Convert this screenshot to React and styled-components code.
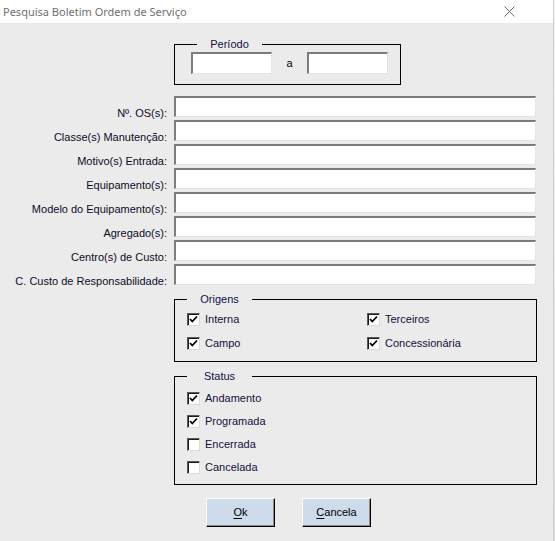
import React from 'react';
import styled, { createGlobalStyle } from 'styled-components';

const GlobalStyle = createGlobalStyle`
  html, body {
    margin: 0;
    padding: 0;
    background: #dcdcdc;
  }
  body {
    font-family: "Liberation Sans", Arial, sans-serif;
    font-size: 11px;
    color: #000;
  }
`;

const Screen = styled.div`
  display: flex;
  width: 555px;
  height: 541px;
  overflow: hidden;
`;

const Window = styled.div`
  width: 553px;
  height: 541px;
  display: flex;
  flex-direction: column;
  background: #ebebeb;
`;

const Strip = styled.div`
  flex: 1;
  background: linear-gradient(#f2f2f2, #dedede);
  border-left: 1px solid #d0d0d0;
`;

const TitleBar = styled.div`
  height: 23px;
  flex: none;
  display: flex;
  align-items: center;
  justify-content: space-between;
  background: #fff;
  padding: 0 38px 0 3px;
`;

const Title = styled.span`
  font-family: "Noto Sans", "Open Sans", sans-serif;
  font-size: 11px;
  color: #707070;
  padding-bottom: 1px;
`;

const Body = styled.div`
  display: grid;
  grid-template-columns: 167px 363px;
  column-gap: 7px;
  padding-top: 14px;
  align-content: start;
`;

const Group = styled.fieldset`
  grid-column: 2;
  box-sizing: border-box;
  width: ${p => p.$width || 363}px;
  margin: ${p => p.$top || 0}px 0 0 0;
  padding: ${p => p.$pad};
  border: 1px solid #000;
  min-width: 0;
`;

const Legend = styled.legend`
  margin-left: ${p => p.$offset}px;
  padding: 0;
  height: 14px;
`;

const LegendText = styled.span`
  display: block;
  width: 65px;
  text-align: center;
  line-height: 14px;
  color: #10104a;
`;

const PeriodRow = styled.div`
  display: flex;
  align-items: center;
`;

const Sep = styled.span`
  width: 35px;
  text-align: center;
  padding-bottom: 1px;
`;

const Input = styled.div`
  box-sizing: border-box;
  width: ${p => p.$width ? p.$width + 'px' : '100%'};
  height: ${p => p.$height || 21}px;
  background: #fff;
  border-top: 2px solid #7c7c7c;
  border-left: 2px solid #7c7c7c;
  border-right: 1px solid #e4e4e4;
  border-bottom: 1px solid #e4e4e4;
`;

const Fields = styled.div`
  grid-column: 1 / span 2;
  display: grid;
  grid-template-columns: 167px 362px;
  column-gap: 7px;
  row-gap: 3px;
  margin-top: 11px;
`;

const Label = styled.label`
  box-sizing: border-box;
  height: 21px;
  text-align: right;
  line-height: 13px;
  padding-top: 11px;
  white-space: nowrap;
  color: #0c0c28;
`;

const Checks = styled.div`
  display: grid;
  grid-template-columns: ${p => p.$cols};
  row-gap: ${p => p.$gap}px;
`;

const CheckItem = styled.div`
  display: flex;
  align-items: center;
  height: 15px;
  gap: 5px;
  line-height: 13px;
  color: #14103c;
`;

const Box = styled.span`
  box-sizing: border-box;
  width: 13px;
  height: 13px;
  flex: none;
  background: #fff;
  border-top: 1px solid #5a5a5a;
  border-left: 1px solid #5a5a5a;
  border-right: 1px solid #dcdcdc;
  border-bottom: 1px solid #dcdcdc;
  box-shadow: inset 1px 1px 0 #1a1a1a;
  display: flex;
  align-items: center;
  justify-content: center;
`;

const Buttons = styled.div`
  grid-column: 2;
  display: flex;
  gap: 27px;
  padding-left: 32px;
  margin-top: 13px;
`;

const Button = styled.button`
  box-sizing: border-box;
  width: 69px;
  height: 29px;
  padding: 0 0 1px;
  font-family: "Liberation Sans", Arial, sans-serif;
  font-size: 11px;
  color: #000;
  background: #cddbea;
  border-top: 1px solid #fff;
  border-left: 1px solid #fff;
  border-right: 1px solid #000;
  border-bottom: 1px solid #000;
  box-shadow: inset -1px -1px 0 #8a8a8a;
  u {
    text-decoration-thickness: 1px;
    text-underline-offset: 2px;
  }
`;

const Check = ({ checked, children }) => (
  <CheckItem>
    <Box>
      {checked && (
        <svg width="9" height="9" viewBox="0 0 9 9">
          <polyline points="1,4 3.3,6.5 8,1.5" fill="none" stroke="#000" strokeWidth="1.8" />
        </svg>
      )}
    </Box>
    <span>{children}</span>
  </CheckItem>
);

const fields = [
  'Nº. OS(s):',
  'Classe(s) Manutenção:',
  'Motivo(s) Entrada:',
  'Equipamento(s):',
  'Modelo do Equipamento(s):',
  'Agregado(s):',
  'Centro(s) de Custo:',
  'C. Custo de Responsabilidade:',
];

export default function App() {
  return (
    <Screen>
      <GlobalStyle />
      <Window>
        <TitleBar>
          <Title>Pesquisa Boletim Ordem de Serviço</Title>
          <svg width="11" height="11" viewBox="0 0 11 11">
            <path d="M0.5 0.5 L10.5 10.5 M10.5 0.5 L0.5 10.5" stroke="#6a6a6a" strokeWidth="1" />
          </svg>
        </TitleBar>
        <Body>
          <Group $width={227} $pad="1px 11px 10px 16px">
            <Legend $offset={6}><LegendText>Período</LegendText></Legend>
            <PeriodRow>
              <Input $width={81} $height={22} />
              <Sep>a</Sep>
              <Input $width={81} $height={22} />
            </PeriodRow>
          </Group>

          <Fields>
            {fields.map(f => (
              <React.Fragment key={f}>
                <Label>{f}</Label>
                <Input />
              </React.Fragment>
            ))}
          </Fields>

          <Group $top={7} $pad="6px 12px 10px 12px">
            <Legend $offset={0}><LegendText>Origens</LegendText></Legend>
            <Checks $cols="180px 180px" $gap={9}>
              <Check checked>Interna</Check>
              <Check checked>Terceiros</Check>
              <Check checked>Campo</Check>
              <Check checked>Concessionária</Check>
            </Checks>
          </Group>

          <Group $top={7} $pad="8px 12px 9px 12px">
            <Legend $offset={0}><LegendText>Status</LegendText></Legend>
            <Checks $cols="1fr" $gap={8}>
              <Check checked>Andamento</Check>
              <Check checked>Programada</Check>
              <Check>Encerrada</Check>
              <Check>Cancelada</Check>
            </Checks>
          </Group>

          <Buttons>
            <Button><u>O</u>k</Button>
            <Button><u>C</u>ancela</Button>
          </Buttons>
        </Body>
      </Window>
      <Strip />
    </Screen>
  );
}
